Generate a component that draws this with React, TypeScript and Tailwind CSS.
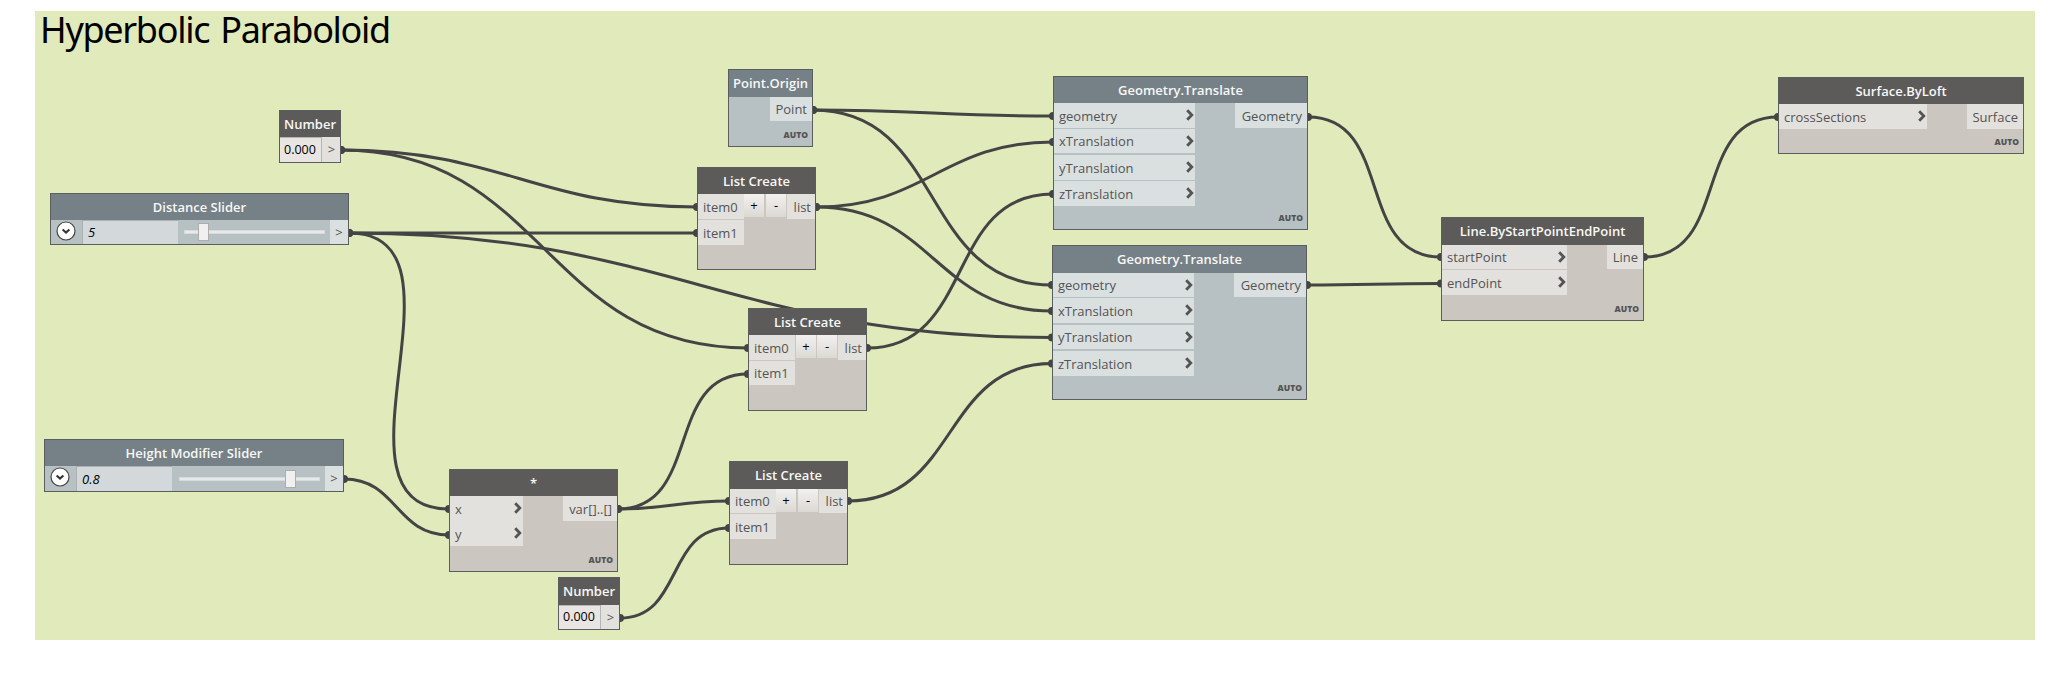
import type { ReactNode } from "react";

type Tone = "slate" | "stone";

const tones = {
  slate: { header: "bg-[#768187]", body: "bg-[#b7c0c3]", port: "bg-[#dae0e0]" },
  stone: { header: "bg-[#5d5b59]", body: "bg-[#cbc6bf]", port: "bg-[#e3e1dd]" },
};

type Port = { name: string; box: string };

type FrameProps = {
  title: string;
  tone: Tone;
  box: string;
  header: string;
  children: ReactNode;
};

function Frame({ title, tone, box, header, children }: FrameProps) {
  return (
    <section
      className={`absolute flex flex-col border border-[#5c5e5d] ${tones[tone].body} ${box}`}
    >
      <h2
        className={`flex shrink-0 items-center justify-center whitespace-nowrap text-[13px] leading-none font-semibold text-[#f7f7f6] ${tones[tone].header} ${header}`}
      >
        {title}
      </h2>
      {children}
    </section>
  );
}

function Chevron() {
  return (
    <svg width="8" height="12" viewBox="0 0 8 12" className="shrink-0">
      <path d="M1.2 1.2 L5.8 6 L1.2 10.8" fill="none" stroke="#545454" strokeWidth="2.8" />
    </svg>
  );
}

function Auto() {
  return (
    <span className="absolute right-[4px] bottom-[7px] text-[8.5px] leading-[9px] font-extrabold text-[#545454]">
      AUTO
    </span>
  );
}

type FunctionProps = {
  title: string;
  tone: Tone;
  box: string;
  header: string;
  inputs?: Port[];
  inputWidth?: string;
  output: Port;
};

function FunctionNode({ title, tone, box, header, inputs = [], inputWidth = "", output }: FunctionProps) {
  return (
    <Frame title={title} tone={tone} box={box} header={header}>
      <div className="flex items-start justify-between">
        <div className={`flex flex-col ${inputWidth}`}>
          {inputs.map((p) => (
            <div
              key={p.name}
              className={`flex items-center justify-between pr-[1px] pb-px pl-[5px] text-[13px] leading-none text-[#545454] ${tones[tone].port} ${p.box}`}
            >
              <span className="pt-[2px]">{p.name}</span>
              <Chevron />
            </div>
          ))}
        </div>
        <div
          className={`flex items-center justify-end pt-px pr-[5px] text-[13px] leading-none text-[#545454] ${tones[tone].port} ${output.box}`}
        >
          {output.name}
        </div>
      </div>
      <Auto />
    </Frame>
  );
}

type ListProps = { box: string; header: string; rows: [string, string]; plus: string };

function ListNode({ box, header, rows, plus }: ListProps) {
  const button =
    "flex h-[23px] w-[20px] items-center justify-center bg-linear-to-b from-[#f2f1ef] to-[#dcd9d4] text-[13px] leading-none text-black";
  return (
    <Frame title="List Create" tone="stone" box={box} header={header}>
      <div className="flex items-start">
        <div className="flex w-[46px] flex-col text-[13px] leading-none text-[#545454]">
          <div className={`flex items-center bg-[#e3e1dd] pt-px pl-[5px] ${rows[0]}`}>item0</div>
          <div className={`mt-px flex items-center bg-[#e3e1dd] pt-px pl-[5px] ${rows[1]}`}>item1</div>
        </div>
        <div className={`flex ${plus}`}>
          <span className={button}>+</span>
          <span className={button}>-</span>
        </div>
        <div
          className={`ml-auto flex w-[28px] items-center justify-end bg-[#e3e1dd] pt-px pr-[4px] text-[13px] leading-none text-[#545454] ${rows[0]}`}
        >
          list
        </div>
      </div>
    </Frame>
  );
}

function NumberNode({ box, header }: { box: string; header: string }) {
  return (
    <Frame title="Number" tone="stone" box={box} header={header}>
      <div className="flex flex-1 bg-[#e3e1dd] text-[13px] leading-none">
        <div className="flex w-[42px] items-center border-t border-r border-[#b5b5b5] bg-[#e8e5e2] pl-[4px] text-[12.5px] text-black">
          0.000
        </div>
        <div className="flex flex-1 items-center justify-center pl-px text-[#545454]">&gt;</div>
      </div>
    </Frame>
  );
}

type SliderProps = {
  title: string;
  value: string;
  box: string;
  track: string;
  thumb: string;
};

function SliderNode({ title, value, box, track, thumb }: SliderProps) {
  return (
    <Frame title={title} tone="slate" box={box} header="h-[26px]">
      <div className="flex flex-1 items-stretch">
        <div className="flex w-[31px] justify-center pr-px">
          <svg width="20" height="20" viewBox="0 0 20 20" className="mt-[1px]">
            <circle cx="10" cy="10" r="9" fill="#fff" stroke="#454545" strokeWidth="1.2" />
            <path d="M6.6 8.4 L10 11.6 L13.4 8.4" fill="none" stroke="#333" strokeWidth="2" />
          </svg>
        </div>
        <div className="flex w-[96px] items-center border-t border-l border-[#acb0b3] bg-[#d3d8db] pl-[5px] text-[13px] leading-none text-black italic">
          {value}
        </div>
        <div className={`flex items-center ${track}`}>
          <div className="relative h-[4px] w-[141px] border border-[#d6dadb] bg-[#e7eaea]">
            <span className={`absolute -top-[8px] h-[18px] w-[11px] border border-[#adadad] bg-[#f0f0f0] ${thumb}`} />
          </div>
        </div>
        <div className="ml-auto flex w-[18px] items-center justify-center bg-[#dae0e0] text-[13px] leading-none text-[#545454]">
          &gt;
        </div>
      </div>
    </Frame>
  );
}

type Wire = [number, number, number, number];

const wires: Wire[] = [
  [341, 150, 697, 207],
  [341, 150, 748, 348],
  [349, 233, 697, 233],
  [349, 233, 1052, 337.5],
  [349, 233, 449, 509],
  [344, 479, 449, 535],
  [813, 110, 1053, 116],
  [813, 110, 1052, 285],
  [816, 207, 1053, 142],
  [816, 207, 1052, 311],
  [867, 348, 1053, 194],
  [848, 501, 1052, 363.5],
  [618, 509, 748, 374],
  [618, 509, 729, 501],
  [620, 618, 729, 528],
  [1308, 117, 1441, 257],
  [1307, 285, 1441, 283.5],
  [1644, 257, 1778, 117],
];

function wirePath([x1, y1, x2, y2]: Wire) {
  const reach = 0.45 * Math.hypot(x2 - x1, y2 - y1);
  return `M${x1} ${y1} C${x1 + reach} ${y1} ${x2 - reach} ${y2} ${x2} ${y2}`;
}

function Wires() {
  return (
    <svg className="absolute inset-0" width="2060" height="676" viewBox="0 0 2060 676">
      {wires.map((w) => (
        <g key={w.join()}>
          <path d={wirePath(w)} fill="none" stroke="#444444" strokeWidth="3" />
          <circle cx={w[0]} cy={w[1]} r="4" fill="#444444" />
          <circle cx={w[2]} cy={w[3]} r="4" fill="#444444" />
        </g>
      ))}
    </svg>
  );
}

export default function App() {
  return (
    <main className="relative h-[676px] w-[2060px] overflow-hidden bg-white pt-[11px] pl-[35px] font-['Open_Sans','Noto_Sans',sans-serif]">
      <div className="h-[629px] w-[2000px] bg-[#e1eabb]">
        <h1 className="pl-[5px] font-['Noto_Sans','Open_Sans',sans-serif] text-[36px] leading-[38px] tracking-[-1.3px] [word-spacing:3px] whitespace-nowrap text-black">
          Hyperbolic Paraboloid
        </h1>
      </div>
      <Wires />

      <NumberNode box="left-[279px] top-[110px] h-[53px] w-[62px]" header="h-[26px] pt-px" />
      <NumberNode box="left-[558px] top-[577px] h-[53px] w-[62px]" header="h-[27px]" />
      <SliderNode
        title="Distance Slider"
        value="5"
        box="left-[50px] top-[193px] h-[52px] w-[299px]"
        track="pl-[6px]"
        thumb="left-[13px]"
      />
      <SliderNode
        title="Height Modifier Slider"
        value="0.8"
        box="left-[44px] top-[439px] h-[53px] w-[300px]"
        track="pl-[7px]"
        thumb="left-[105px]"
      />
      <FunctionNode
        title="Point.Origin"
        tone="slate"
        box="left-[728px] top-[69px] h-[78px] w-[85px]"
        header="h-[27px]"
        output={{ name: "Point", box: "h-[24px] w-[42px]" }}
      />
      <ListNode
        box="left-[697px] top-[167px] h-[103px] w-[119px]"
        header="h-[26px] pt-px"
        rows={["h-[25px]", "h-[25px]"]}
        plus="ml-0 gap-[2px]"
      />
      <ListNode
        box="left-[748px] top-[308px] h-[103px] w-[119px]"
        header="h-[26px] pt-px"
        rows={["h-[25px]", "h-[24px]"]}
        plus="ml-[1px] gap-px"
      />
      <ListNode
        box="left-[729px] top-[461px] h-[104px] w-[119px]"
        header="h-[27px]"
        rows={["h-[24px]", "h-[25px]"]}
        plus="ml-0 gap-[2px]"
      />
      <FunctionNode
        title="*"
        tone="stone"
        box="left-[449px] top-[469px] h-[103px] w-[169px]"
        header="h-[26px]"
        inputWidth="w-[73px]"
        inputs={[
          { name: "x", box: "h-[25px]" },
          { name: "y", box: "h-[25px]" },
        ]}
        output={{ name: "var[]..[]", box: "h-[25px] w-[54px]" }}
      />
      <FunctionNode
        title="Geometry.Translate"
        tone="slate"
        box="left-[1053px] top-[76px] h-[154px] w-[255px]"
        header="h-[26px] pt-px"
        inputWidth="w-[141px]"
        inputs={[
          { name: "geometry", box: "h-[25px]" },
          { name: "xTranslation", box: "mt-px h-[24px]" },
          { name: "yTranslation", box: "mt-[2px] h-[25px]" },
          { name: "zTranslation", box: "mt-px h-[25px]" },
        ]}
        output={{ name: "Geometry", box: "h-[25px] w-[72px]" }}
      />
      <FunctionNode
        title="Geometry.Translate"
        tone="slate"
        box="left-[1052px] top-[245px] h-[155px] w-[255px]"
        header="h-[27px]"
        inputWidth="w-[141px]"
        inputs={[
          { name: "geometry", box: "h-[24px]" },
          { name: "xTranslation", box: "mt-px h-[25px]" },
          { name: "yTranslation", box: "mt-[2px] h-[24px]" },
          { name: "zTranslation", box: "mt-[2px] h-[25px]" },
        ]}
        output={{ name: "Geometry", box: "h-[24px] w-[72px]" }}
      />
      <FunctionNode
        title="Line.ByStartPointEndPoint"
        tone="stone"
        box="left-[1441px] top-[217px] h-[104px] w-[203px]"
        header="h-[27px]"
        inputWidth="w-[125px]"
        inputs={[
          { name: "startPoint", box: "h-[24px]" },
          { name: "endPoint", box: "mt-px h-[25px]" },
        ]}
        output={{ name: "Line", box: "h-[24px] w-[36px]" }}
      />
      <FunctionNode
        title="Surface.ByLoft"
        tone="stone"
        box="left-[1778px] top-[77px] h-[77px] w-[246px]"
        header="h-[26px] pt-px"
        inputWidth="w-[148px]"
        inputs={[{ name: "crossSections", box: "h-[25px]" }]}
        output={{ name: "Surface", box: "h-[25px] w-[56px]" }}
      />
    </main>
  );
}
